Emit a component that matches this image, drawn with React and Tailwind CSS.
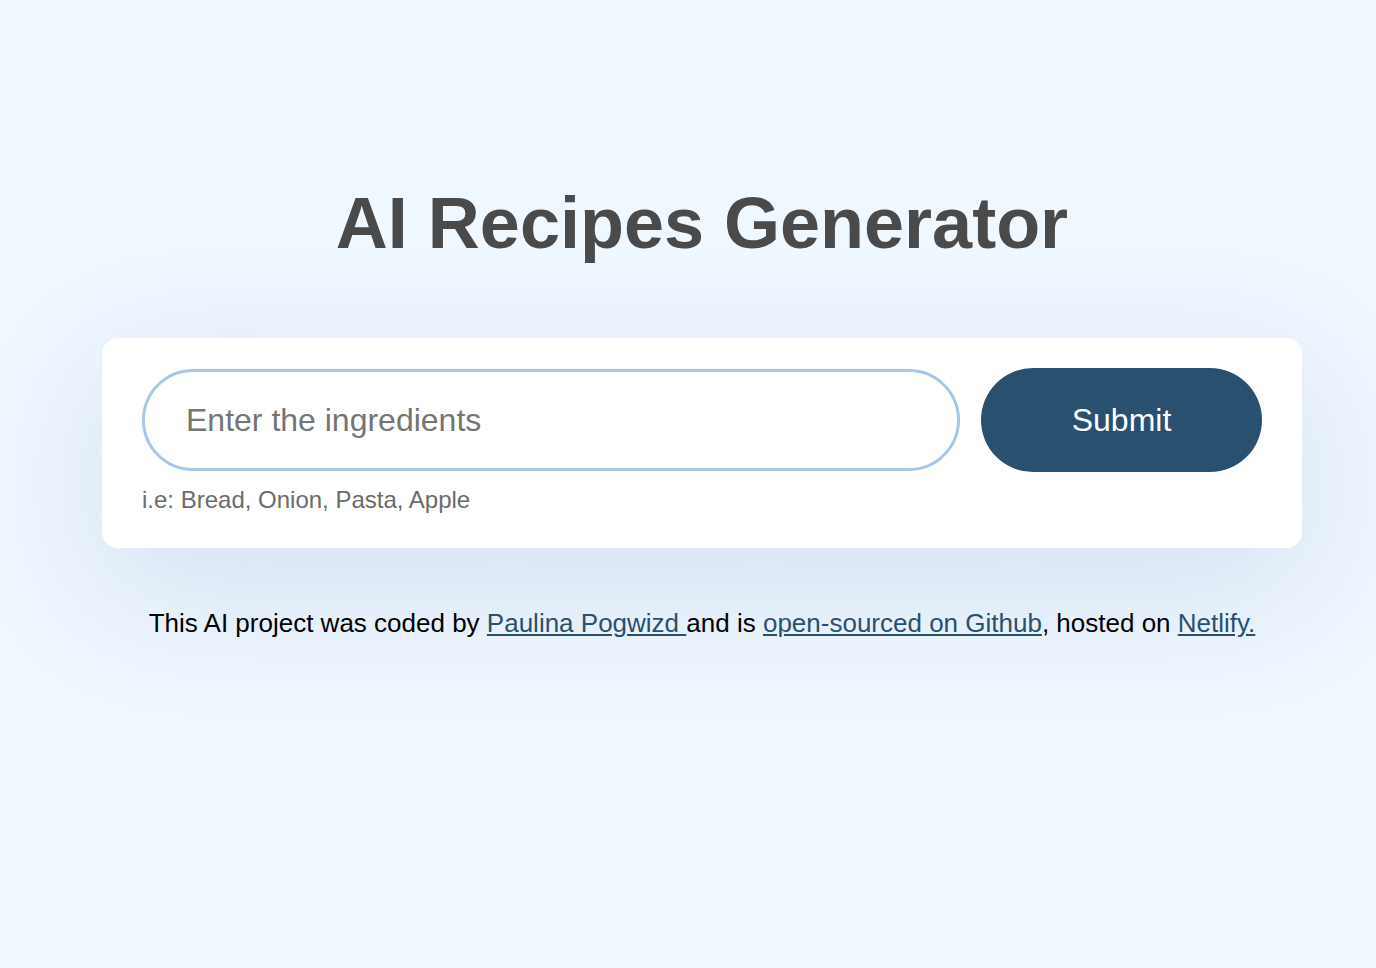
import React from 'react'

const App = () => {
  return (
    <div className="min-h-[968px] w-full bg-[#eff7ff] font-['Liberation_Sans',Arial,sans-serif] overflow-hidden">
      <div className="w-[1200px] ml-[102px] pt-[187px]">
        {/* Title */}
        <h1 className="text-center text-[72px] leading-none font-bold text-[#4a4a4a]">
          AI Recipes Generator
        </h1>

        {/* Form card */}
        <div className="mt-[79px] bg-white rounded-2xl px-10 pt-[30px] pb-[34px] shadow-[0_40px_140px_rgba(40,80,140,0.13)]">
          <form className="flex items-center gap-[21px]" onSubmit={(e) => e.preventDefault()}>
            <input
              type="text"
              placeholder="Enter the ingredients"
              className="flex-1 h-[102px] rounded-full border-[3px] border-[#a8c6e8] px-[41px] text-[32px] text-[#333] placeholder:text-[#757575] outline-none"
            />
            <button
              type="submit"
              className="w-[281px] h-[104px] rounded-full bg-[#2a5070] text-white text-[32px]"
            >
              Submit
            </button>
          </form>
          <p className="mt-[14px] text-[24px] leading-[28px] text-[#6b6b6b]">
            i.e: Bread, Onion, Pasta, Apple
          </p>
        </div>

        {/* Footer */}
        <p className="mt-[60px] text-center text-[26px] leading-[30px] text-black">
          This AI project was coded by{' '}
          <a href="#" className="text-[#2a5070] underline">Paulina Pogwizd </a>
          and is{' '}
          <a href="#" className="text-[#2a5070] underline">open-sourced on Github</a>, hosted on{' '}
          <a href="#" className="text-[#2a5070] underline">Netlify.</a>
        </p>
      </div>
    </div>
  )
}

export default App
